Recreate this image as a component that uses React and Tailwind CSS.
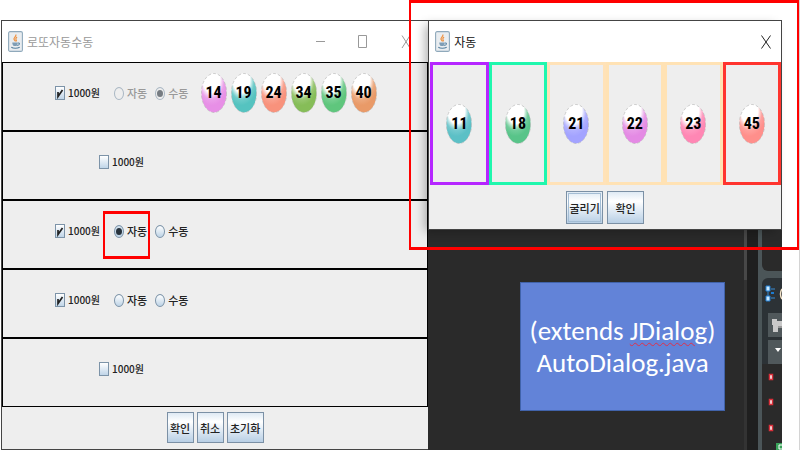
import React from "react";

const ROWS = [
  { checked: true, mode: "manual", disabled: true, balls: [[14, "#e78fe6"], [19, "#55c3c0"], [24, "#f8927c"], [34, "#86bd58"], [35, "#5fc67d"], [40, "#e99a68"]] },
  { checked: false },
  { checked: true, mode: "auto" },
  { checked: true },
  { checked: false },
];

const CELLS = [
  { n: 11, ball: "#5cc0c6", frame: "border-[#b526ff]" },
  { n: 18, ball: "#58c489", frame: "border-[#1ff7ad]" },
  { n: 21, ball: "#a3a3ff", frame: "border-[#ffe2b8]" },
  { n: 22, ball: "#e48ae4", frame: "border-[#ffe2b4]" },
  { n: 23, ball: "#ff87b4", frame: "border-[#ffe2b4]" },
  { n: 45, ball: "#ff8f8b", frame: "border-[#ff342e]" },
];

function Ball({ n, color }) {
  const id = "ball" + n;
  return (
    <span className="grid h-10 w-[26px] shrink-0 place-items-center">
      <svg className="h-10 w-[26px] [grid-area:1/1]" viewBox="0 0 26 40" aria-hidden="true">
        <defs>
          <radialGradient id={id} cx="0.4" cy="0.16" r="0.84">
            <stop offset="0.4" stopColor="#ffffff" />
            <stop offset="0.6" stopColor={color} stopOpacity="0.85" />
            <stop offset="0.78" stopColor={color} />
            <stop offset="1" stopColor={color} />
          </radialGradient>
        </defs>
        <ellipse cx="13" cy="20" rx="12.6" ry="19.5" fill="#fff" />
        <ellipse cx="13" cy="20" rx="12.6" ry="19.5" fill={"url(#" + id + ")"} stroke="#b9b9b9" strokeWidth="0.7" strokeDasharray="3 2" />
      </svg>
      <span className="font-['Liberation_Sans_Narrow','Roboto_Condensed',Roboto,sans-serif] text-[16px] leading-5 font-bold text-black [grid-area:1/1]">{n}</span>
    </span>
  );
}

function JavaIcon() {
  return (
    <svg className="h-[21px] w-[15px] shrink-0" viewBox="0 0 15 21" aria-hidden="true">
      <rect x="0.6" y="0.6" width="13.8" height="19.8" rx="1.5" fill="#e9edf0" stroke="#8fa9bb" strokeWidth="1.1" />
      <path d="M7.800 3.500c1 2-2.300 3-1.800 4.700 .2 1 1.200 1.300 1.400 2.200M9 6C8.200 6.700 7.300 7.500 8 8.600c.6.7.4 1.300-.2 1.800" fill="none" stroke="#ee9140" strokeWidth="1.200" />
      <path d="M4.300 11.500h5.500c0 2-.6 3-1.500 3.500H5.800C4.900 14.500 4.300 13.500 4.300 11.500z" fill="#7e9db5" />
      <path d="M10 12c2-.4 2 2.200-.8 2.500M3.300 16.300c2 1.300 6 1.300 8.400 0" fill="none" stroke="#55809f" strokeWidth="1.100" />
    </svg>
  );
}

function Check({ checked }) {
  return (
    <label className="flex items-center gap-[3px]">
      <span className="grid">
        <input type="checkbox" defaultChecked={checked} className="peer h-[14px] w-[10px] appearance-none border border-[#7c93a8] bg-linear-to-b from-white to-[#c0d5e8] [grid-area:1/1]" />
        <svg className="pointer-events-none hidden h-[14px] w-[10px] [grid-area:1/1] peer-checked:block" viewBox="0 0 10 14" aria-hidden="true">
          <path d="M3 6v4.500L7.500 4" fill="none" stroke="#222" strokeWidth="1.700" />
        </svg>
      </span>
      <span className="text-[10px] whitespace-nowrap">1000원</span>
    </label>
  );
}

function Radio({ name, label, checked, disabled }) {
  return (
    <label className={"flex items-center gap-[3px] " + (disabled ? "text-[#999]" : "")}>
      <span className={"grid " + (disabled ? "opacity-60" : "")}>
        <input type="radio" name={name} defaultChecked={checked} disabled={disabled} className="peer h-[13px] w-[10px] appearance-none rounded-[50%] border border-[#7c93a8] bg-linear-to-b from-white to-[#bdd3e6] [grid-area:1/1] checked:from-[#d5e3ef] disabled:from-[#eee] disabled:to-[#eee]" />
        <span className="pointer-events-none hidden h-[7px] w-[6px] place-self-center rounded-[50%] bg-[#27323c] [grid-area:1/1] peer-checked:block" />
      </span>
      <span className="whitespace-nowrap">{label}</span>
    </label>
  );
}

function SwingButton({ children, focused, size }) {
  return (
    <button type="button" className={"border border-[#7b90a5] bg-linear-to-b from-[#dfeaf4] via-white via-30% to-[#b8cfe5] p-px " + size}>
      <span className={"flex h-full items-center justify-center border whitespace-nowrap " + (focused ? "border-[#a4bdd4]" : "border-transparent")}>{children}</span>
    </button>
  );
}

function LottoWindow() {
  return (
    <section className="flex w-[54.7%] shrink-0 flex-col border-t border-b border-l border-[#444] bg-[#eee]">
      <header className="flex h-[41px] items-center bg-white pl-[6px] text-[#999]">
        <JavaIcon />
        <h1 className="pl-1 text-[12px] leading-5 font-normal">로또자동수동</h1>
        <svg className="mr-[17px] ml-auto h-[14px] w-[95px]" viewBox="0 0 95 14" fill="none" stroke="#999" aria-hidden="true">
          <path d="M0 6.500h9M42.500 .5h8v12h-8zM86 .5l8 12.500M94 .5L86 13" />
        </svg>
      </header>
      {ROWS.map((r, i) => (
        <div key={i} className={"flex h-[69px] items-center border border-black pb-[7px] " + (r.checked ? "pl-[52px]" : "pl-[96px]")}>
          <Check checked={r.checked} />
          {r.checked && (
            <div className="flex gap-[8px] pl-[14px]">
              <Radio name={"row" + i} label="자동" checked={r.mode === "auto"} disabled={r.disabled} />
              <Radio name={"row" + i} label="수동" checked={r.mode === "manual"} disabled={r.disabled} />
            </div>
          )}
          {r.balls && (
            <div className="flex gap-1 pl-[12px]">
              {r.balls.map(([n, c]) => <Ball key={n} n={n} color={c} />)}
            </div>
          )}
        </div>
      ))}
      <footer className="flex flex-1 items-start justify-center gap-[3px] pt-[5px]">
        <SwingButton size="h-[31px] w-[27px]">확인</SwingButton>
        <SwingButton size="h-[31px] w-[27px]">취소</SwingButton>
        <SwingButton size="h-[31px] w-[37px]">초기화</SwingButton>
      </footer>
    </section>
  );
}

function AutoDialog() {
  return (
    <section className="relative border border-[#444] bg-[#eee] shadow-[-5px_3px_10px_-2px_rgba(0,0,0,0.3)]">
      <header className="flex h-[41px] items-center bg-white pl-[6px] text-[#111]">
        <JavaIcon />
        <h2 className="pl-1 text-[12px] leading-5 font-normal">자동</h2>
        <svg className="mr-[10px] ml-auto h-[14px] w-[10px]" viewBox="0 0 10 14" stroke="#222" aria-hidden="true">
          <path d="M.5 .5l9 13M9.500 .5l-9 13" />
        </svg>
      </header>
      <div className="grid grid-cols-6 pl-px">
        {CELLS.map((c) => (
          <div key={c.n} className={"flex h-[123px] items-center justify-center border-[3px] " + c.frame}>
            <Ball n={c.n} color={c.ball} />
          </div>
        ))}
      </div>
      <footer className="flex justify-center gap-1 pt-[6px] pb-[5px]">
        <SwingButton focused size="h-[33px] w-[37px]">굴리기</SwingButton>
        <SwingButton size="h-[33px] w-[37px]">확인</SwingButton>
      </footer>
    </section>
  );
}

function IdeEdge() {
  return (
    <div className="flex w-[38px] shrink-0">
      <div className="w-[3px] bg-[#333]">
        <div className="h-[50px] bg-[#484848]" />
      </div>
      <div className="w-[11px] bg-[#1f1f1f]" />
      <div className="flex flex-1 flex-col bg-[#4b5558] pl-1">
        <div className="h-[41px] rounded-bl-md bg-[#2a2a2a]" />
        <div className="mt-[7px] flex flex-1 flex-col rounded-tl-md bg-[#2c3236]">
          <svg className="h-[172px] w-5" viewBox="0 0 20 172" aria-hidden="true">
            <path d="M9 11h4M9 20h4M6 11v10" stroke="#3b8bd0" strokeWidth="1" />
            <path d="M4 8h4v5H4zM4 18h4v5H4z" fill="#cbeaff" stroke="#1c7bd0" />
            <path d="M9 15h3" stroke="#1c7bd0" strokeWidth="2" />
            <path d="M20 11q-3 5 0 10" fill="none" stroke="#f2e2c8" strokeWidth="1.500" />
            <path d="M6 35h14v24H6zM6 62h14v24H6z" fill="#50585b" />
            <g fill="#c9c9c9">
              <path d="M10 41h5v6h-5z" />
              <path d="M14 43h6v5h-6z" />
              <path d="M11 46h5v8h-5z" />
              <path d="M16 48h4v2h-4z" fill="#999" />
            </g>
            <path d="M13 70h6l-3 4z" fill="#fff" />
            <path d="M0 86h20v86H0z" fill="#2a2a2a" />
            <path d="M7.500 96.500h3v5h-3zM7.500 121.500h3v5h-3zM7.500 147.500h3v5h-3z" fill="#fff" stroke="#d9303b" strokeWidth="1.500" />
            <path d="M14 165h6v7h-6z" fill="#39a35a" />
            <path d="M20 167h-3v4h3" fill="none" stroke="#fff" />
          </svg>
        </div>
      </div>
    </div>
  );
}

export default function App() {
  return (
    <main className="flex min-h-screen w-full overflow-hidden border-r border-[#d4d4d4] bg-white pt-5 pr-[17px] pl-px font-['Noto_Sans_CJK_KR',sans-serif] text-[11px] leading-4 font-medium text-[#222]">
      <LottoWindow />
      <div className="relative flex min-w-0 flex-1 flex-col bg-[#2a2a2a]">
        <AutoDialog />
        <div className="flex flex-1">
          <div className="flex flex-1 justify-end pt-[52px] pr-[19px]">
            <p className="flex h-[129px] w-[205px] flex-col items-center justify-center border border-[#4163aa] bg-[#6283d8] font-[Carlito,Lato,sans-serif] text-[27px] leading-8 font-normal text-white">
              <span className="whitespace-nowrap">
                (extends <span className="underline decoration-[#e0304a] decoration-wavy decoration-1 underline-offset-2">JDialog</span>)
              </span>
              <span>AutoDialog.java</span>
            </p>
          </div>
          <IdeEdge />
        </div>
        <div className="pointer-events-none absolute -top-5 -right-[17px] -left-[19px] h-[250px] border-x-2 border-y-[3px] border-[#f00]" />
      </div>
      <div className="pointer-events-none absolute top-[211px] left-[103px] h-[48px] w-[47px] border-x-2 border-y-[3px] border-[#f00]" />
    </main>
  );
}
